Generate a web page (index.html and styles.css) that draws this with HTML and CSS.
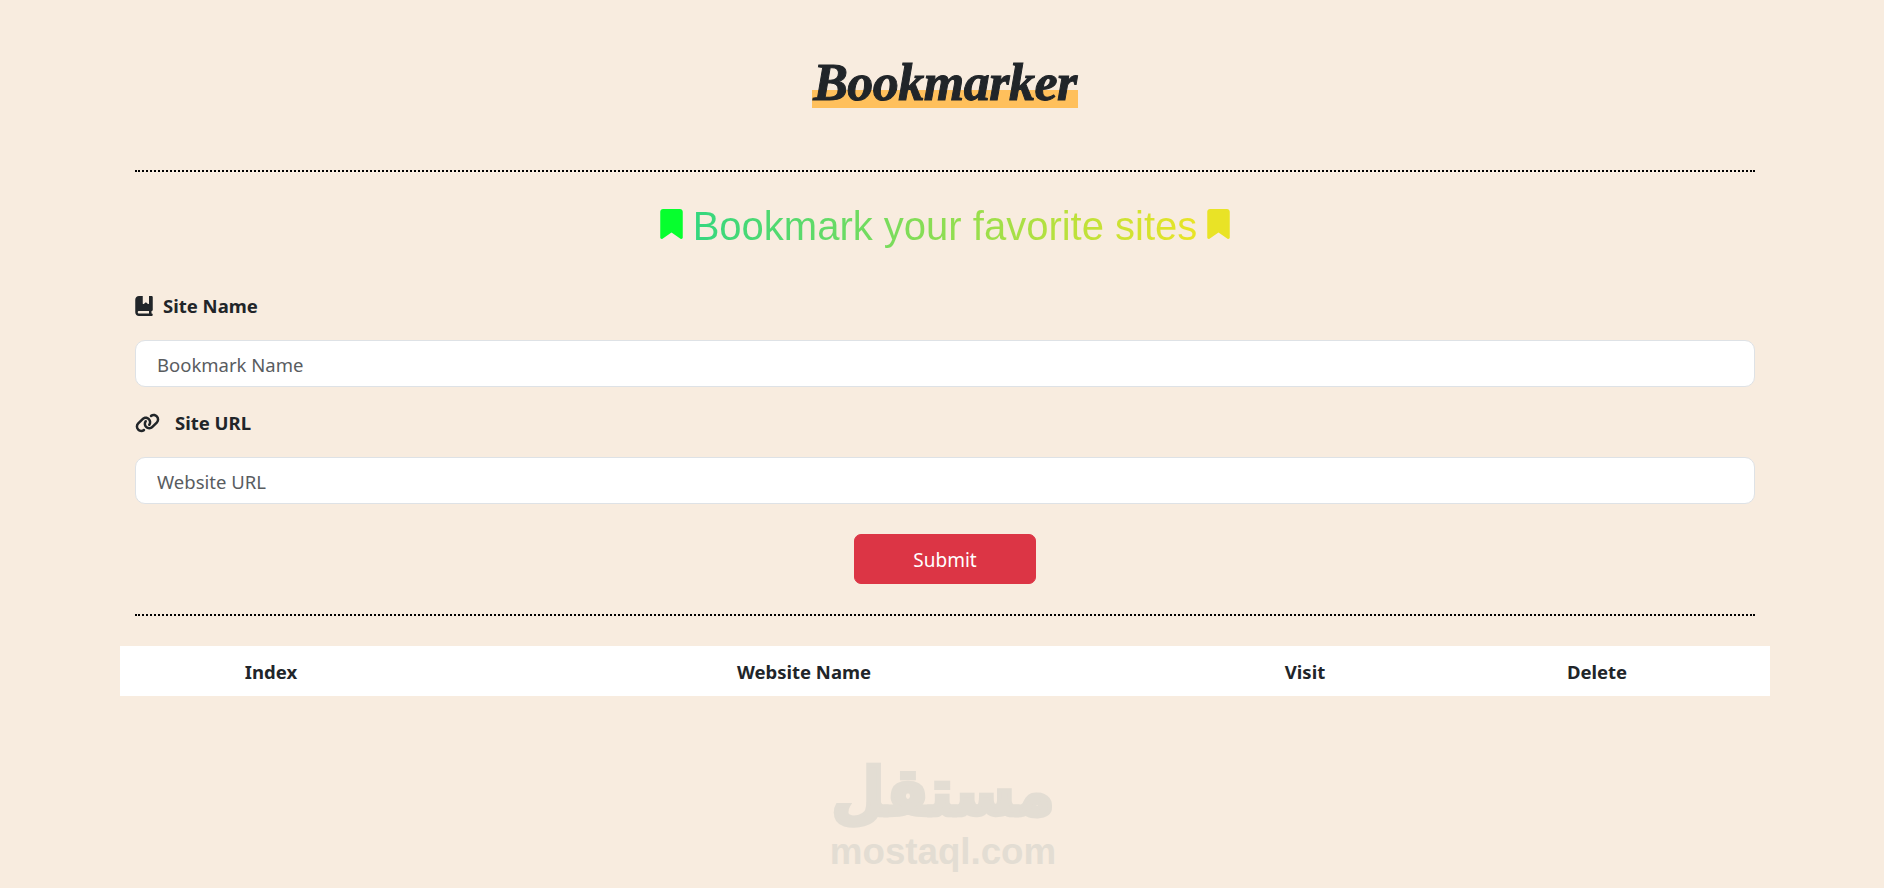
FILE: index.html
```html
<!DOCTYPE html>
<html lang="en">
<head>
    <meta charset="UTF-8">
    <meta name="viewport" content="width=device-width, initial-scale=1.0">
    <title>Bookmarker</title>
    <link rel="stylesheet" href="styles.css">
</head>
<body>
    <div class="container">
        <header class="brand">
            <h1 class="brand-title">Bookmarker</h1>
        </header>

        <hr class="divider">

        <h2 class="tagline">
            <svg class="tagline-icon icon-green" viewBox="0 0 384 512"><path d="M0 48V487.7C0 501.1 10.9 512 24.3 512c5 0 9.9-1.5 14-4.4L192 400 345.7 507.6c4.1 2.9 9 4.4 14 4.4c13.4 0 24.3-10.9 24.3-24.3V48c0-26.5-21.5-48-48-48H48C21.5 0 0 21.5 0 48z"/></svg>
            <span class="tagline-text">Bookmark your favorite sites</span>
            <svg class="tagline-icon icon-yellow" viewBox="0 0 384 512"><path d="M0 48V487.7C0 501.1 10.9 512 24.3 512c5 0 9.9-1.5 14-4.4L192 400 345.7 507.6c4.1 2.9 9 4.4 14 4.4c13.4 0 24.3-10.9 24.3-24.3V48c0-26.5-21.5-48-48-48H48C21.5 0 0 21.5 0 48z"/></svg>
        </h2>

        <form class="site-form">
            <label class="field-label" for="siteName">
                <svg class="label-icon" viewBox="0 0 448 512"><path d="M0 96C0 43 43 0 96 0h96V190.7c0 13.4 15.5 20.9 26 12.5L272 160l54 43.2c10.5 8.4 26 .9 26-12.5V0h32 32c17.7 0 32 14.3 32 32V352c0 17.7-14.3 32-32 32v64c17.7 0 32 14.3 32 32s-14.3 32-32 32H384 96c-53 0-96-43-96-96V96zM64 416c0 17.7 14.3 32 32 32H352V384H96c-17.7 0-32 14.3-32 32z"/></svg>
                Site Name
            </label>
            <input class="field-input" id="siteName" type="text" placeholder="Bookmark Name">

            <label class="field-label field-label-url" for="siteUrl">
                <svg class="label-icon label-icon-link" viewBox="0 0 640 512"><path d="M579.8 267.7c56.5-56.5 56.5-148 0-204.5c-50-50-128.8-56.5-186.3-15.4l-1.6 1.1c-14.4 10.3-17.7 30.3-7.4 44.6s30.3 17.7 44.6 7.4l1.6-1.1c32.1-22.9 76-19.3 103.8 8.6c31.5 31.5 31.5 82.5 0 114L422.3 334.8c-31.5 31.5-82.5 31.5-114 0c-27.9-27.9-31.5-71.8-8.6-103.8l1.1-1.6c10.3-14.4 6.9-34.4-7.4-44.6s-34.4-6.9-44.6 7.4l-1.1 1.6C206.5 251.2 213 330 263 380c56.5 56.5 148 56.5 204.5 0L579.8 267.7zM60.2 244.3c-56.5 56.5-56.5 148 0 204.5c50 50 128.8 56.5 186.3 15.4l1.6-1.1c14.4-10.3 17.7-30.3 7.4-44.6s-30.3-17.7-44.6-7.4l-1.6 1.1c-32.1 22.9-76 19.3-103.8-8.6C74 372 74 321 105.5 289.5L217.7 177.2c31.5-31.5 82.5-31.5 114 0c27.9 27.9 31.5 71.8 8.6 103.9l-1.1 1.6c-10.3 14.4-6.9 34.4 7.4 44.6s34.4 6.9 44.6-7.4l1.1-1.6C433.5 260.8 427 182 377 132c-56.5-56.5-148-56.5-204.5 0L60.2 244.3z"/></svg>
                Site URL
            </label>
            <input class="field-input" id="siteUrl" type="text" placeholder="Website URL">

            <div class="form-actions">
                <button class="btn-submit" type="button">Submit</button>
            </div>
        </form>

        <hr class="divider divider-bottom">

        <table class="bookmarks">
            <thead>
                <tr>
                    <th class="col-index">Index</th>
                    <th class="col-name">Website Name</th>
                    <th class="col-visit">Visit</th>
                    <th class="col-delete">Delete</th>
                </tr>
            </thead>
            <tbody id="tableContent"></tbody>
        </table>
    </div>

    <div class="watermark">
        <div class="watermark-ar" lang="ar" dir="rtl">مستقل</div>
        <div class="watermark-en">mostaql.com</div>
    </div>
</body>
</html>
```

FILE: styles.css
```css
* {
    box-sizing: border-box;
}
body {
    margin: 0;
    min-height: 888px;
    background-color: #f8ecdf;
    color: #212529;
    font-family: "Noto Sans", sans-serif;
    font-size: 18.5px;
    overflow: hidden;
}
.container {
    width: 1650px;
    margin-left: 120px;
    padding: 0 15px;
}
.brand {
    height: 170px;
    padding-top: 48px;
    text-align: center;
}
.brand-title {
    display: inline-block;
    margin: 0;
    width: 266px;
    height: 60px;
    line-height: 70px;
    font-family: "Liberation Serif", serif;
    font-style: italic;
    font-weight: 700;
    font-size: 52px;
    letter-spacing: -0.5px;
    white-space: nowrap;
    -webkit-text-stroke: 1px #212529;
    background: linear-gradient(to bottom, transparent 42px, #ffc05c 42px);
}
.divider {
    margin: 0;
    border: 0;
    border-top: 2px dotted #000;
}
.tagline {
    display: flex;
    justify-content: center;
    align-items: center;
    gap: 10px;
    margin: 0;
    padding-top: 30px;
    height: 78px;
    font-family: "Liberation Sans", Arial, sans-serif;
    font-weight: 400;
    font-size: 40px;
    line-height: 44px;
}
.tagline-icon {
    width: 23px;
    height: 30px;
    margin-top: -4px;
}
.icon-green {
    fill: #06ff2e;
}
.icon-yellow {
    fill: #e9e326;
}
.tagline-text {
    background: linear-gradient(to right, #33d77f, #e9e425);
    -webkit-background-clip: text;
    background-clip: text;
    color: transparent;
}
.site-form {
    padding-top: 42px;
}
.field-label {
    display: flex;
    align-items: center;
    gap: 10px;
    height: 27px;
    font-weight: 700;
}
.field-label-url {
    gap: 15px;
    margin-top: 22px;
}
.label-icon {
    width: 18px;
    height: 20px;
    fill: #212529;
}
.label-icon-link {
    width: 25px;
}
.field-input {
    display: block;
    width: 100%;
    height: 47px;
    margin-top: 21px;
    padding: 2px 21px 0;
    border: 1px solid #dee2e6;
    border-radius: 10px;
    background: #fff;
    color: #212529;
    font-family: inherit;
    font-size: 18.5px;
}
.field-input::placeholder {
    color: #595c5f;
}
.form-actions {
    display: flex;
    justify-content: center;
    margin-top: 30px;
}
.btn-submit {
    width: 182px;
    height: 50px;
    padding-top: 2px;
    border: 1px solid #dc3545;
    border-radius: 7px;
    background-color: #dc3545;
    color: #fff;
    font-family: inherit;
    font-size: 19px;
}
.divider-bottom {
    margin-top: 30px;
}
.bookmarks {
    width: 1650px;
    margin: 30px -15px 0;
    border-collapse: collapse;
    table-layout: fixed;
    background: #fff;
}
.bookmarks th {
    height: 50px;
    padding: 0;
    text-align: center;
    font-weight: 700;
}
.col-index {
    width: 302px;
}
.col-name {
    width: 764px;
}
.col-visit {
    width: 238px;
}
.watermark {
    position: absolute;
    left: 828px;
    top: 757px;
    width: 230px;
    color: #e3ddd3;
    text-align: center;
}
.watermark-ar {
    height: 70px;
    font-family: "DejaVu Sans", sans-serif;
    font-weight: 700;
    font-size: 61px;
    line-height: 70px;
    -webkit-text-stroke: 4px #e3ddd3;
    transform: scaleY(1.08);
}
.watermark-en {
    margin-top: 10px;
    font-family: "Liberation Sans", Arial, sans-serif;
    font-weight: 700;
    font-size: 36.7px;
    line-height: 30px;
}
```
